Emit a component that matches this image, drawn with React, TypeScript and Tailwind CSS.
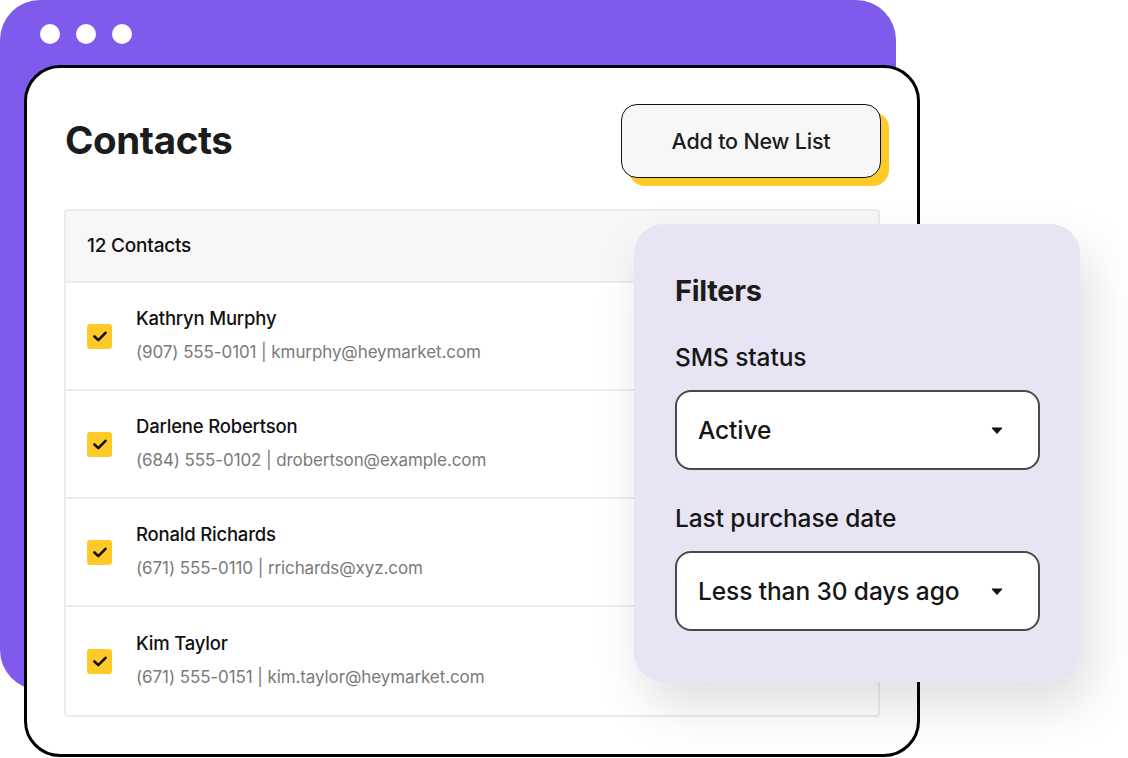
const contacts = [
  { name: "Kathryn Murphy", info: "(907) 555-0101 | kmurphy@heymarket.com" },
  { name: "Darlene Robertson", info: "(684) 555-0102 | drobertson@example.com" },
  { name: "Ronald Richards", info: "(671) 555-0110 | rrichards@xyz.com" },
  { name: "Kim Taylor", info: "(671) 555-0151 | kim.taylor@heymarket.com" },
];

const Check = () => (
  <div className="w-[25px] h-[25px] rounded-[3px] bg-[#FFCA28] flex items-center justify-center shrink-0">
    <svg width="14" height="11" viewBox="0 0 14 11" fill="none">
      <path d="M1.5 5.5l3.8 3.6L12.5 1.8" stroke="#111" strokeWidth="2.6" strokeLinecap="round" strokeLinejoin="round" />
    </svg>
  </div>
);

const Caret = () => (
  <svg width="12" height="7" viewBox="0 0 12 7">
    <path d="M1 1h10L6 6.5z" fill="#111" stroke="#111" strokeWidth="1" strokeLinejoin="round" />
  </svg>
);

const Select = ({ value }: { value: string }) => (
  <div className="h-[80px] w-[365px] rounded-[16px] border-2 border-[#4a4a4a] bg-white flex items-center justify-between pl-[21px] pr-[35px]">
    <span className="text-[24.5px] font-medium text-[#161616] tracking-[-0.1px]">{value}</span>
    <Caret />
  </div>
);

export default function App() {
  return (
    <div className="relative w-[1128px] h-[758px] bg-white overflow-hidden font-['Inter',sans-serif]">
      {/* purple browser window */}
      <div className="absolute left-0 top-0 w-[896px] h-[690px] rounded-[40px] bg-[#7F5AEC]">
        <div className="flex gap-[16px] pl-[40px] pt-[24px]">
          <div className="w-[20px] h-[20px] rounded-full bg-white"></div>
          <div className="w-[20px] h-[20px] rounded-full bg-white"></div>
          <div className="w-[20px] h-[20px] rounded-full bg-white"></div>
        </div>
      </div>

      {/* contacts card */}
      <div className="relative ml-[24px] mt-[65px] w-[896px] h-[692px] rounded-[36px] border-[3px] border-black bg-white pl-[37px] pr-[37px] pt-[36px]">
        <div className="flex items-start justify-between">
          <h1 className="ml-[1px] mt-[14px] text-[38.5px] leading-[44px] font-bold text-[#1c1c1c] tracking-[-0.4px]">Contacts</h1>
          <div className="relative w-[260px] h-[74px] -mr-[1px]">
            <div className="absolute left-[8px] top-[8px] w-[260px] h-[74px] rounded-[16px] bg-[#FFCA28]"></div>
            <div className="relative w-[260px] h-[74px] rounded-[16px] border-[1.5px] border-[#111] bg-[#f7f7f7] flex items-center justify-center">
              <span className="text-[21.5px] font-medium text-[#1c1c1c] tracking-[-0.2px]">Add to New List</span>
            </div>
          </div>
        </div>

        <div className="mt-[31px] w-[816px] rounded-[4px] border-2 border-[#ececec] overflow-hidden">
          <div className="h-[72px] bg-[#f7f7f7] border-b-2 border-[#ececec] flex items-center pl-[21px]">
            <span className="text-[19px] font-medium text-[#111] tracking-[-0.2px]">12 Contacts</span>
          </div>
          {contacts.map((c, i) => (
            <div
              key={c.name}
              className={`h-[108px] flex items-center pl-[21px] gap-[24px] ${i < contacts.length - 1 ? "border-b-2 border-[#ececec]" : ""}`}
            >
              <Check />
              <div className="flex flex-col gap-[11px] -mt-[4px]">
                <span className="text-[18.5px] leading-[24px] font-medium text-[#111] tracking-[-0.2px]">{c.name}</span>
                <span className="text-[17px] leading-[22px] text-[#7a7a7a] tracking-[-0.1px]">{c.info}</span>
              </div>
            </div>
          ))}
        </div>
      </div>

      {/* filters panel */}
      <div className="absolute left-[634px] top-[224px] w-[446px] h-[458px] rounded-[30px] bg-[#E8E4F4] shadow-[10px_24px_50px_rgba(0,0,0,0.13)] pl-[41px] pt-[49px]">
        <h2 className="text-[29px] leading-[36px] font-bold text-[#1c1c1c] tracking-[-0.3px]">Filters</h2>
        <div className="mt-[33px] text-[24.5px] leading-[30px] font-medium text-[#161616] tracking-[-0.1px]">SMS status</div>
        <div className="mt-[18px]">
          <Select value="Active" />
        </div>
        <div className="mt-[33px] text-[24.5px] leading-[30px] font-medium text-[#161616] tracking-[-0.1px]">Last purchase date</div>
        <div className="mt-[18px]">
          <Select value="Less than 30 days ago" />
        </div>
      </div>
    </div>
  );
}
